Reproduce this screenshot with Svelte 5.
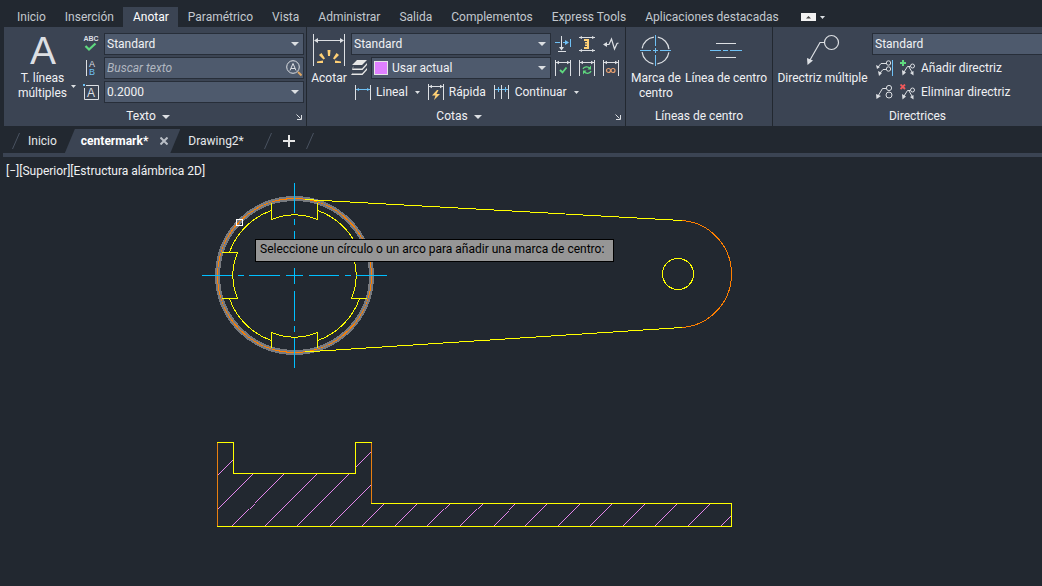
<script>
    const menuTabs = [
        'Inicio', 'Inserción', 'Anotar', 'Paramétrico', 'Vista', 'Administrar',
        'Salida', 'Complementos', 'Express Tools', 'Aplicaciones destacadas'
    ];
    let activeTab = $state('Anotar');
    let search = $state('');

    // 45 degree hatch, starting on the bottom edge of the section
    const hatch = [];
    for (let i = 0; i < 18; i++) {
        hatch.push(166 + Math.round(i * 32.55));
    }
    const section = 'M217.5 526.5V442.5H233.5V473.5H355.5V442.5H371.5V503.5H731.5V526.5Z';
</script>

{#snippet caret()}
    <svg class="caret" width="8" height="4" viewBox="0 0 8 4"><path d="M0 0H8L4 4Z" fill="#dcdfe3" /></svg>
{/snippet}

{#snippet smallCaret()}
    <svg class="caret" width="5" height="3" viewBox="0 0 5 3"><path d="M0 0H5L2.5 3Z" fill="#dcdfe3" /></svg>
{/snippet}

{#snippet launcher()}
    <svg width="6" height="6" viewBox="0 0 6 6"><path d="M.5 .5L4.5 4.5M5.500 1V5.500H1" fill="none" stroke="#dcdfe3" /></svg>
{/snippet}

{#snippet dimFrame()}
    <path d="M.5 0V16M15.500 0V16M1 2.500H15" stroke="#dcdfe3" fill="none" />
    <path d="M1 2.500L4 .8V4.200ZM15 2.500L12 .8V4.200Z" fill="#dcdfe3" />
{/snippet}

{#snippet multiLeader()}
    <path d="M4 12L7.500 6.500H10" stroke="#dcdfe3" fill="none" />
    <path d="M2 10L6 12.500L2.500 15.500Z" fill="#dcdfe3" />
    <circle cx="12.500" cy="6" r="2" stroke="#dcdfe3" fill="none" />
    <path d="M9 7L12 12" stroke="#dcdfe3" />
    <path d="M10 13L13.500 11V15.500Z" fill="#dcdfe3" />
{/snippet}

<div class="app">
    <nav class="menu">
        {#each menuTabs as tab}
            <button class="menu-tab" class:active={tab === activeTab} onclick={() => (activeTab = tab)}>{tab}</button>
        {/each}
        <button class="minimize" aria-label="Minimizar cinta">
            <svg width="24" height="8" viewBox="0 0 24 8">
                <rect width="15" height="8" fill="#f2f2f2" />
                <path d="M5 5.500L7.500 3L10 5.500Z" fill="#444" />
                <path d="M19 3H24L21.500 6Z" fill="#dcdfe3" />
            </svg>
        </button>
    </nav>

    <div class="ribbon">
        <section class="panel texto">
            <div class="tools">
                <button class="big">
                    <span class="letter">A</span>
                    <span class="with-caret"><span>T. líneas<br />múltiples</span>{@render smallCaret()}</span>
                </button>
                <div class="icons">
                    <button aria-label="Revisar ortografía">
                        <svg width="18" height="18" viewBox="0 0 18 18">
                            <text x="9" y="6" class="abc">ABC</text>
                            <path d="M3.500 11L7 14.500L13.500 8.500" fill="none" stroke="#5fd97f" stroke-width="2.200" />
                        </svg>
                    </button>
                    <button aria-label="Alinear texto">
                        <svg width="18" height="18" viewBox="0 0 18 18">
                            <path d="M4.500 1V17" stroke="#dcdfe3" />
                            <text x="7" y="8" class="glyph">A</text>
                            <text x="7" y="16" class="glyph blue">B</text>
                        </svg>
                    </button>
                    <button aria-label="Altura de texto">
                        <svg width="18" height="18" viewBox="0 0 18 18">
                            <path d="M4 2.500H16.500V16.500H2.500V5" fill="none" stroke="#dcdfe3" />
                            <rect x="1" y="1" width="2" height="2" fill="#6fc1f5" />
                            <text x="5" y="14" class="glyph large">A</text>
                        </svg>
                    </button>
                </div>
                <div class="fields">
                    <div class="field">
                        <select aria-label="Estilo de texto"><option>Standard</option></select>
                        {@render caret()}
                    </div>
                    <div class="field">
                        <input type="text" placeholder="Buscar texto" aria-label="Buscar texto" bind:value={search} />
                        <svg class="find" width="16" height="16" viewBox="0 0 16 16">
                            <circle cx="7" cy="7" r="6.300" fill="none" stroke="#dcdfe3" />
                            <path d="M4 10.500L7 3.500L10 10.500M5 8.500H9" fill="none" stroke="#dcdfe3" />
                            <path d="M12 12L15.500 15.500" stroke="#dfa661" stroke-width="2" />
                        </svg>
                    </div>
                    <div class="field">
                        <select aria-label="Altura"><option>0.2000</option></select>
                        {@render caret()}
                    </div>
                </div>
            </div>
            <div class="title"><button>Texto {@render caret()}</button><button aria-label="Estilos de texto">{@render launcher()}</button></div>
        </section>

        <section class="panel cotas">
            <div class="tools">
                <button class="big">
                    <svg width="34" height="36" viewBox="0 0 34 36">
                        <path d="M1.500 1V33M32.500 1V33M3 7.500H31" stroke="#dcdfe3" />
                        <path d="M2 7.500L6 5V10ZM32 7.500L28 5V10Z" fill="#dcdfe3" />
                        <path d="M15.500 17H18.500L18 23H16ZM7 22L9.500 20L13 25.500L11.500 26.500ZM27 22L24.500 20L21 25.500L22.500 26.500ZM5 28.500L11 27.500V30H5ZM29 28.500L23 27.500V30H29Z" fill="#ffd075" />
                    </svg>
                    <span>Acotar</span>
                </button>
                <div class="cotas-grid">
                    <div class="row">
                        <div class="field">
                            <select aria-label="Estilo de cota"><option>Standard</option></select>
                            {@render caret()}
                        </div>
                        <button aria-label="Partir cota">
                            <svg width="16" height="16" viewBox="0 0 16 16">
                                <path d="M6.500 0V14M3 15.500H11" stroke="#dcdfe3" />
                                <path d="M4 11H9L6.500 14.500Z" fill="#dcdfe3" />
                                <path d="M0 6.500H5M8 6.500H12M15.500 3V11" stroke="#6fc1f5" />
                                <path d="M10 4L14 6.500L10 9Z" fill="#6fc1f5" />
                            </svg>
                        </button>
                        <button aria-label="Ajustar espacio">
                            <svg width="16" height="16" viewBox="0 0 16 16">
                                <path d="M0 1.500H16M0 14.500H16" stroke="#dcdfe3" />
                                <path d="M0 1.500L3 0V3ZM16 1.500L13 0V3ZM0 14.500L3 13V16ZM16 14.500L13 13V16Z" fill="#dcdfe3" />
                                <path d="M5 3H10V13H5V11H8V10H6V8.500H8V7.500H6V6H8V5H5Z" fill="#ffd075" />
                            </svg>
                        </button>
                        <button aria-label="Línea de recodo">
                            <svg width="16" height="16" viewBox="0 0 16 16">
                                <path d="M2 8.500H6L8.500 3L11.500 13L14 7.500L15.500 7" fill="none" stroke="#dcdfe3" stroke-width="1.200" />
                                <path d="M0 8.500L4 6V11Z" fill="#dcdfe3" />
                            </svg>
                        </button>
                    </div>
                    <div class="row">
                        <svg class="layers" width="17" height="16" viewBox="0 0 17 16">
                            <path d="M6 0H16L11 5H1ZM3 6L1 8.500H11L16 3V5L11.500 10H1ZM3 11L1 13.500H11L16 8V10L11.500 15H0Z" fill="#e6e6e6" />
                        </svg>
                        <div class="field swatch-field">
                            <i class="swatch"></i>
                            <select aria-label="Capa de cota"><option>Usar actual</option></select>
                            {@render caret()}
                        </div>
                        <button aria-label="Inspeccionar">
                            <svg width="16" height="16" viewBox="0 0 16 16">
                                {@render dimFrame()}
                                <path d="M5 10L7.500 12.500L11.500 7.500" fill="none" stroke="#5fd97f" stroke-width="1.800" />
                            </svg>
                        </button>
                        <button aria-label="Actualizar">
                            <svg width="16" height="16" viewBox="0 0 16 16">
                                {@render dimFrame()}
                                <path d="M4 9C5 6.500 9 6 11 8.500M12 11C11 14 7 14 5 11.500" fill="none" stroke="#5fd97f" stroke-width="1.300" />
                                <path d="M12 5.500V9.500H8.500ZM4 14.500V10.500H7.500Z" fill="#5fd97f" />
                            </svg>
                        </button>
                        <button aria-label="Reasociar">
                            <svg width="16" height="16" viewBox="0 0 16 16">
                                {@render dimFrame()}
                                <circle cx="5.500" cy="10.500" r="2" fill="none" stroke="#e8a070" stroke-width="1.200" />
                                <circle cx="10" cy="10.500" r="2" fill="none" stroke="#e8a070" stroke-width="1.200" />
                            </svg>
                        </button>
                    </div>
                    <div class="row actions">
                        <button class="labelled">
                            <svg width="16" height="16" viewBox="0 0 16 16">
                                <path d="M.5 1V16M15.500 1V16" stroke="#dcdfe3" />
                                <path d="M1 5.500H15" stroke="#6fc1f5" />
                                <path d="M1 5.500L4 4V7ZM15 5.500L12 4V7Z" fill="#6fc1f5" />
                            </svg>
                            Lineal
                            {@render smallCaret()}
                        </button>
                        <button class="labelled">
                            <svg width="16" height="16" viewBox="0 0 16 16">
                                {@render dimFrame()}
                                <path d="M9 6L4 11.500H7.500L6 16L12 10H8.500L10.500 6Z" fill="#ffd075" />
                            </svg>
                            Rápida
                        </button>
                        <button class="labelled">
                            <svg width="16" height="16" viewBox="0 0 16 16">
                                <path d="M.5 1V15M7.500 1V15M14.500 1V15" stroke="#dcdfe3" />
                                <path d="M1 5.500H7M8 5.500H14M4.500 3V8M11.500 3V8" stroke="#6fc1f5" />
                            </svg>
                            Continuar
                            {@render smallCaret()}
                        </button>
                    </div>
                </div>
            </div>
            <div class="title"><button>Cotas {@render caret()}</button><button aria-label="Estilos de cota">{@render launcher()}</button></div>
        </section>

        <section class="panel lineas">
            <div class="tools">
                <button class="big">
                    <svg width="32" height="36" viewBox="0 0 32 36">
                        <circle cx="15.500" cy="17.500" r="13.500" fill="none" stroke="#dcdfe3" stroke-width="1.200" stroke-dasharray="17.200 4" stroke-dashoffset="-2" />
                        <path d="M15.500 2V13M15.500 15V20M15.500 22V33M0 17.500H11M13 17.500H18M20 17.500H31" stroke="#6fc1f5" />
                    </svg>
                    <span>Marca de<br />centro</span>
                </button>
                <button class="big">
                    <svg width="32" height="36" viewBox="0 0 32 36">
                        <path d="M6 10.500H26M6 24.500H26" stroke="#dcdfe3" />
                        <path d="M0 17.500H11M13 17.500H18M20 17.500H32" stroke="#6fc1f5" />
                    </svg>
                    <span>Línea de centro</span>
                </button>
            </div>
            <div class="title plain">Líneas de centro</div>
        </section>

        <section class="panel directrices">
            <div class="tools">
                <button class="big">
                    <svg width="34" height="36" viewBox="0 0 34 36">
                        <circle cx="25.500" cy="9.500" r="7" fill="none" stroke="#dcdfe3" stroke-width="1.200" />
                        <path d="M18 9.500H14L4 27" fill="none" stroke="#dcdfe3" stroke-width="1.200" />
                        <path d="M1 25L7 27.500L1.500 32Z" fill="#dcdfe3" />
                    </svg>
                    <span>Directriz múltiple</span>
                </button>
                <div class="fields">
                    <div class="field">
                        <select aria-label="Estilo de directriz"><option>Standard</option></select>
                        {@render caret()}
                    </div>
                    <div class="row leader">
                        <button aria-label="Alinear directrices">
                            <svg width="18" height="18" viewBox="0 0 18 18">
                                <circle cx="12.500" cy="4" r="2.200" fill="none" stroke="#dcdfe3" />
                                <circle cx="12.500" cy="10" r="2.200" fill="none" stroke="#dcdfe3" />
                                <path d="M2 8L5 4.500H10M4 14L7 10.500H10" fill="none" stroke="#dcdfe3" />
                                <path d="M0 6L4 8L1 10ZM2 12L6 14L3 17Z" fill="#dcdfe3" />
                                <path d="M16.500 1V17" stroke="#6fc1f5" />
                            </svg>
                        </button>
                        <button class="labelled">
                            <svg width="16" height="16" viewBox="0 0 16 16">
                                <path d="M3 0V6M0 3H6" stroke="#5fd97f" stroke-width="2" />
                                {@render multiLeader()}
                            </svg>
                            Añadir directriz
                        </button>
                    </div>
                    <div class="row leader">
                        <button aria-label="Agrupar directrices">
                            <svg width="18" height="18" viewBox="0 0 18 18">
                                <circle cx="13" cy="5" r="2.600" fill="none" stroke="#dcdfe3" />
                                <circle cx="13" cy="12" r="3" fill="none" stroke="#dcdfe3" />
                                <path d="M2 13L6.500 5.500H10" fill="none" stroke="#dcdfe3" />
                                <path d="M0 11L5 13L.5 16Z" fill="#dcdfe3" />
                            </svg>
                        </button>
                        <button class="labelled">
                            <svg width="16" height="16" viewBox="0 0 16 16">
                                <path d="M.5 .5L5 5M5 .5L.5 5" stroke="#f0595b" stroke-width="1.800" />
                                {@render multiLeader()}
                            </svg>
                            Eliminar directriz
                        </button>
                    </div>
                </div>
            </div>
            <div class="title plain">Directrices</div>
        </section>
    </div>

    <nav class="files">
        <svg class="slash" width="8" height="16" viewBox="0 0 8 16"><path d="M.5 16L7.500 0" stroke="#4a5361" /></svg>
        <button class="file">Inicio</button>
        <button class="file current">
            centermark*
            <svg width="8" height="8" viewBox="0 0 8 8"><path d="M.5 .5L7.500 7.500M7.500 .5L.5 7.500" stroke="#b9bec6" stroke-width="2" /></svg>
        </button>
        <button class="file last">Drawing2*</button>
        <svg class="slash" width="8" height="16" viewBox="0 0 8 16"><path d="M.5 16L7.500 0" stroke="#4a5361" /></svg>
        <button class="new" aria-label="Nuevo dibujo">
            <svg width="12" height="12" viewBox="0 0 12 12"><path d="M6 0V12M0 6H12" stroke="#e6e6e6" stroke-width="2" /></svg>
        </button>
        <svg class="slash" width="8" height="16" viewBox="0 0 8 16"><path d="M.5 16L7.500 0" stroke="#4a5361" /></svg>
    </nav>

    <main class="canvas">
        <div class="view-label">[−][Superior][Estructura alámbrica 2D]</div>
        <svg class="drawing" width="760" height="360" viewBox="0 183 760 360">
            <defs>
                <clipPath id="section-clip"><path d={section} /></clipPath>
            </defs>

            <!-- plan view -->
            <circle cx="294.500" cy="275.500" r="77" fill="none" stroke="#787b80" stroke-width="5" />
            <circle cx="294.500" cy="275.500" r="77" fill="none" stroke="#ff7f00" />
            <path d="M682 220.500A53.660 53.660 0 0 1 682 327.500" fill="none" stroke="#ff7f00" />
            <g fill="none" stroke="#ffff00">
                <path d="M305 199.500L682 220.500M305 352L682 327.500" />
                <circle cx="678" cy="274" r="15.500" />
                <path d="M317.500 210.400A69 69 0 0 1 359.600 252.500M359.600 298.500A69 69 0 0 1 317.500 340.600M271.500 340.600A69 69 0 0 1 229.400 298.500M229.400 252.500A69 69 0 0 1 271.500 210.400" />
                <path d="M271.500 203V219.500A61 61 0 0 1 317.500 219.500V203" />
                <path d="M271.500 348V332.500A61 61 0 0 0 317.500 332.500V348" />
                <path d="M222 252.500H237.500A61 61 0 0 0 237.500 298.500H222" />
                <path d="M367 252.500H351.500A61 61 0 0 1 351.500 298.500H367" />
            </g>
            <path
                d="M294.500 183V213M294.500 219V225M294.500 231V262M294.500 268V284M294.500 291V321M294.500 326V332M294.500 338V368
                   M202 275.500H232M238 275.500H244M249 275.500H280M286 275.500H303M309 275.500H339M345 275.500H351M356 275.500H387"
                stroke="#00bfff"
            />
            <rect x="236.500" y="219.500" width="6" height="6" fill="none" stroke="#fff" />

            <!-- section view -->
            <g clip-path="url(#section-clip)" stroke="#f890ff" stroke-width="0.900">
                {#each hatch as x}
                    <path d="M{x} 526.500l90 -90" />
                {/each}
            </g>
            <path d={section} fill="none" stroke="#ffff00" />
            <path d="M217.500 443V526M371.500 443V503" stroke="#e87f10" />
        </svg>
        <div class="tooltip">Seleccione un círculo o un arco para añadir una marca de centro:</div>
    </main>
</div>

<style>
    :global(body) {
        margin: 0;
        background: #222830;
    }

    .app {
        min-height: 100vh;
        display: flex;
        flex-direction: column;
        overflow: hidden;
        background: #222830;
        color: #f0f1f3;
        font-family: Roboto, sans-serif;
        font-size: 12px;
        line-height: 15px;
    }

    button,
    select,
    input {
        margin: 0;
        padding: 0;
        border: 0;
        background: none;
        color: inherit;
        font: inherit;
    }

    button {
        white-space: nowrap;
    }

    svg {
        display: block;
        flex: none;
    }

    .menu {
        display: flex;
        height: 20px;
        padding: 7px 0 0 7px;
    }

    .menu-tab {
        padding: 0 9px 0 10px;
        color: #c3c8cf;
    }

    .menu-tab.active {
        background: #3b4453;
        color: #fff;
    }

    .minimize {
        margin-left: 13px;
    }

    .ribbon {
        display: flex;
        height: 99px;
        margin-left: 4px;
        background: #3b4453;
    }

    .panel {
        display: flex;
        flex: none;
        flex-direction: column;
        box-sizing: border-box;
        padding-top: 6px;
        border-right: 1px solid #222830;
    }

    .texto {
        width: 303px;
    }

    .cotas {
        width: 319px;
    }

    .lineas {
        width: 147px;
    }

    .directrices {
        width: 290px;
    }

    .tools {
        display: flex;
        height: 70px;
    }

    .title {
        display: grid;
        grid-template-columns: 1fr 14px;
        align-items: center;
        justify-items: center;
        margin-top: 6px;
    }

    .title.plain {
        grid-template-columns: 1fr;
    }

    .title button {
        display: flex;
        align-items: center;
        gap: 6px;
    }

    .big {
        display: flex;
        flex: none;
        flex-direction: column;
        align-items: center;
        gap: 2px;
    }

    .letter {
        height: 36px;
        font: 39px/36px "Liberation Sans", sans-serif;
        color: #dcdfe3;
    }

    .with-caret {
        display: flex;
        align-items: center;
        gap: 4px;
    }

    .texto .big {
        width: 78px;
    }

    .texto .with-caret {
        margin-left: 8px;
    }

    .cotas .big {
        width: 44px;
    }

    .lineas .tools {
        justify-content: space-between;
        padding: 0 5px;
    }

    .directrices .big {
        width: 99px;
    }

    .icons {
        display: grid;
        grid-template-rows: repeat(3, 22px);
        gap: 2px;
        width: 22px;
        align-items: center;
    }

    .abc {
        fill: #dcdfe3;
        font: bold 7px "Liberation Sans", sans-serif;
        text-anchor: middle;
    }

    .glyph {
        fill: #dcdfe3;
        font: 9px "Liberation Sans", sans-serif;
    }

    .glyph.blue {
        fill: #6fc1f5;
    }

    .glyph.large {
        font-size: 12px;
    }

    .fields,
    .cotas-grid {
        display: flex;
        flex: none;
        flex-direction: column;
        gap: 2px;
        width: 200px;
    }

    .cotas-grid {
        width: 270px;
    }

    /* the caret shares the cell with its control */
    .field {
        display: grid;
        box-sizing: border-box;
        height: 22px;
        border: 1px solid #272e39;
        background: #4e5a6d;
        align-items: center;
    }

    .field > * {
        grid-area: 1 / 1;
    }

    .field select,
    .field input {
        width: 100%;
        height: 20px;
        box-sizing: border-box;
        padding: 0 20px 0 2px;
        appearance: none;
    }

    .field input::placeholder {
        color: #b1b7c0;
        font-style: italic;
        opacity: 1;
    }

    .field .caret {
        justify-self: end;
        margin-right: 4px;
        pointer-events: none;
    }

    .find {
        justify-self: end;
        margin-right: 1px;
    }

    .swatch {
        width: 12px;
        height: 12px;
        margin-left: 2px;
        border: 1px solid #e6e6e6;
        background: #df80ff;
    }

    .swatch-field select {
        padding-left: 20px;
    }

    .row {
        display: flex;
        align-items: center;
        height: 22px;
        gap: 8px;
    }

    .cotas-grid .field {
        flex: none;
        width: 200px;
        margin-right: -4px;
    }

    .cotas-grid .swatch-field {
        width: 180px;
        margin-left: -5px;
    }

    .labelled {
        display: flex;
        align-items: center;
        gap: 5px;
    }

    .labelled .caret {
        margin-left: 2px;
    }

    .actions {
        padding-left: 4px;
    }

    .leader {
        gap: 6px;
        padding-left: 4px;
    }

    .files {
        display: flex;
        align-items: center;
        height: 24px;
        margin-left: 3px;
        padding: 3px 0 0 9px;
        border-bottom: 4px solid #3b4453;
    }

    .file {
        padding: 0 8px;
        color: #e6e8eb;
    }

    .file.current {
        display: flex;
        align-items: center;
        gap: 12px;
        height: 24px;
        padding: 0 12px 0 16px;
        background: #3b4453;
        color: #fff;
        font-weight: bold;
        clip-path: polygon(10px 0, 100% 0, calc(100% - 10px) 100%, 0 100%);
    }

    .file.last {
        padding-right: 20px;
    }

    .new {
        padding: 0 11px;
    }

    .canvas {
        position: relative;
        flex: 1;
    }

    .view-label {
        height: 19px;
        padding: 7px 0 0 6px;
    }

    .drawing {
        shape-rendering: crispEdges;
    }

    /* cursor prompt floating over the drawing */
    .tooltip {
        position: absolute;
        left: 255px;
        top: 82px;
        box-sizing: border-box;
        width: 359px;
        height: 23px;
        padding: 2px 4px;
        border: 1px solid #000;
        background: #969696;
        color: #000;
        white-space: nowrap;
    }
</style>
